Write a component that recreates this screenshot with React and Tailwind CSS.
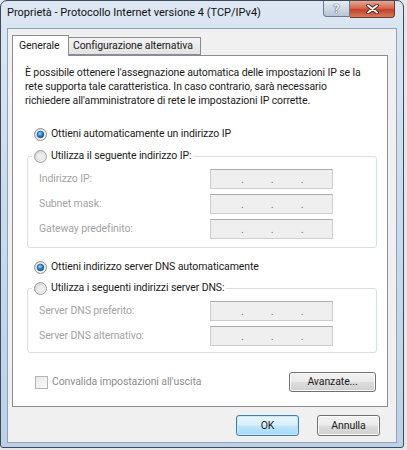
import { useId } from "react";

const RadioOn = () => {
  const id = useId().replace(/:/g, "");
  return (
    <svg width="13" height="13" viewBox="0 0 13 13" className="shrink-0">
      <defs>
        <linearGradient id={`rb${id}`} x1="0" y1="0" x2="1" y2="1">
          <stop offset="0" stopColor="#d4d4d4" />
          <stop offset="1" stopColor="#ffffff" />
        </linearGradient>
        <radialGradient id={`rd${id}`} cx="0.4" cy="0.35" r="0.75">
          <stop offset="0" stopColor="#a8dcff" />
          <stop offset="0.45" stopColor="#2f8ed8" />
          <stop offset="1" stopColor="#0b427c" />
        </radialGradient>
      </defs>
      <circle cx="6.5" cy="6.5" r="6" fill={`url(#rb${id})`} stroke="#8c8e90" />
      <circle cx="6.5" cy="6.5" r="3.3" fill={`url(#rd${id})`} stroke="#174c85" strokeWidth="0.7" />
    </svg>
  );
};

const RadioOff = () => {
  const id = useId().replace(/:/g, "");
  return (
    <svg width="13" height="13" viewBox="0 0 13 13" className="shrink-0">
      <defs>
        <linearGradient id={`ro${id}`} x1="0" y1="0" x2="1" y2="1">
          <stop offset="0" stopColor="#d2d2d2" />
          <stop offset="1" stopColor="#fbfbfb" />
        </linearGradient>
      </defs>
      <circle cx="6.5" cy="6.5" r="6" fill={`url(#ro${id})`} stroke="#9a9b9c" />
      <circle cx="6.5" cy="6.5" r="3.6" fill="#eeeeee" stroke="#dcdcdc" strokeWidth="0.6" />
    </svg>
  );
};

const IpBox = () => (
  <div className="flex h-[20px] w-[123px] items-center border border-[#cdcdcd] border-t-[#acacac] bg-[#efefef] text-[11px] leading-none text-[#707070]">
    <span className="ml-[30px]">.</span>
    <span className="ml-[27px]">.</span>
    <span className="ml-[27px]">.</span>
  </div>
);

const FieldRow = ({ label }) => (
  <div className="flex h-[20px] items-center">
    <span className="w-[182px] pl-[11px] text-[#a3a3a3]">{label}</span>
    <IpBox />
  </div>
);

const WinButton = ({ children, className = "" }) => (
  <button
    type="button"
    className={`flex items-center justify-center rounded-[3px] border border-[#707070] bg-[linear-gradient(#f2f2f2_0%,#ebebeb_48%,#dddddd_52%,#cfcfcf_100%)] text-[10.5px] tracking-[-0.1px] text-[#1b1b1b] shadow-[inset_0_0_0_1px_#fcfcfc] ${className}`}
  >
    {children}
  </button>
);

export default function App() {
  return (
    <div className="flex h-[450px] w-[407px] items-start overflow-hidden bg-[#e6e6e6] font-['Roboto',sans-serif] text-[10.5px] tracking-[-0.1px] text-[#1b1b1b]">
      <div className="flex h-[448px] w-[404px] flex-col rounded-t-[7px] rounded-b-[3px] border border-[#3e4a59] bg-[linear-gradient(#dde7f3_0%,#cbdcee_40%,#bcd1e8_100%)] px-[6px] pb-[4px]">
        <div className="flex h-[27px] items-start">
          <span className="flex-1 pt-[5px] text-[11px] leading-[14px] tracking-normal text-[#111]">
            Proprietà - Protocollo Internet versione 4 (TCP/IPv4)
          </span>
          <div className="mr-[2px] flex">
            <div className="flex h-[16px] w-[27px] items-center justify-center rounded-bl-[4px] border border-t-0 border-[#6b7a8d] bg-[linear-gradient(#e4ebf3_0%,#cfd9e5_50%,#b7c5d6_100%)] text-[12px] font-bold leading-none text-[#f4f6f9] [text-shadow:0_0_1px_#3c4856,0_0_1px_#3c4856]">
              ?
            </div>
            <div className="flex h-[17px] w-[45px] items-center justify-center rounded-br-[4px] border border-l-0 border-t-0 border-[#6e3b33] bg-[linear-gradient(#e9a795_0%,#d4674d_45%,#c2412a_55%,#d77a5a_100%)]">
              <svg width="13" height="10" viewBox="0 0 13 10">
                <path d="M2 1.5 L11 8.5 M11 1.5 L2 8.5" stroke="#4a1d16" strokeWidth="3.6" strokeLinecap="round" />
                <path d="M2 1.5 L11 8.5 M11 1.5 L2 8.5" stroke="#ffffff" strokeWidth="2" strokeLinecap="round" />
              </svg>
            </div>
          </div>
        </div>

        <div className="flex flex-1 flex-col border border-[#8fa2b8] bg-[#f0f0f0] pl-[4px] pr-[8px]">
          <div className="relative z-10 mt-[6px] -mb-px flex items-end">
            <div className="flex h-[21px] w-[57px] items-center whitespace-nowrap border border-b-0 border-[#898c95] bg-white pl-[6px] pb-[1px]">
              Generale
            </div>
            <div className="-ml-px mb-px flex h-[18px] w-[133px] items-center whitespace-nowrap border border-[#898c95] bg-[linear-gradient(#f3f3f3,#e3e3e3)] pl-[4px]">
              Configurazione alternativa
            </div>
          </div>

          <div className="flex h-[352px] flex-col border border-[#898c95] bg-white">
            <p className="ml-[12px] mt-[10px] leading-[14px]">
              <span className="block whitespace-nowrap">
                È possibile ottenere l'assegnazione automatica delle impostazioni IP se la
              </span>
              <span className="block whitespace-nowrap">
                rete supporta tale caratteristica. In caso contrario, sarà necessario
              </span>
              <span className="block whitespace-nowrap">
                richiedere all'amministratore di rete le impostazioni IP corrette.
              </span>
            </p>

            <div className="ml-[21px] mt-[18px] flex h-[16px] items-center gap-[4px]">
              <RadioOn />
              <span>Ottieni automaticamente un indirizzo IP</span>
            </div>

            <fieldset className="ml-[14px] mt-[6px] w-[350px] rounded-[3px] border border-[#d5dfe5] pb-[8px]">
              <legend className="ml-[4px] flex h-[16px] items-center gap-[4px] px-[2px]">
                <RadioOff />
                <span>Utilizza il seguente indirizzo IP:</span>
              </legend>
              <div className="mt-[5px] flex flex-col gap-[5px]">
                <FieldRow label="Indirizzo IP:" />
                <FieldRow label="Subnet mask:" />
                <FieldRow label="Gateway predefinito:" />
              </div>
            </fieldset>

            <div className="ml-[21px] mt-[11px] flex h-[16px] items-center gap-[4px]">
              <RadioOn />
              <span>Ottieni indirizzo server DNS automaticamente</span>
            </div>

            <fieldset className="ml-[14px] mt-[5px] w-[350px] rounded-[3px] border border-[#d5dfe5] pb-[6px]">
              <legend className="ml-[4px] flex h-[16px] items-center gap-[4px] px-[2px]">
                <RadioOff />
                <span>Utilizza i seguenti indirizzi server DNS:</span>
              </legend>
              <div className="mt-[5px] flex flex-col gap-[5px]">
                <FieldRow label="Server DNS preferito:" />
                <FieldRow label="Server DNS alternativo:" />
              </div>
            </fieldset>

            <div className="mt-[19px] flex h-[20px] items-center pl-[22px] pr-[11px]">
              <div className="h-[13px] w-[13px] border border-[#b4b4b4] bg-[linear-gradient(135deg,#e8e8e8,#fafafa)]" />
              <span className="ml-[4px] flex-1 text-[#8d8d8d]">Convalida impostazioni all'uscita</span>
              <WinButton className="h-[20px] w-[87px]">Avanzate...</WinButton>
            </div>
          </div>

          <div className="mt-[8px] flex justify-end gap-[18px] pr-[8px]">
            <button
              type="button"
              className="flex h-[21px] w-[63px] items-center justify-center rounded-[3px] border border-[#3c7fb1] bg-[linear-gradient(#eaf6fd_0%,#d9f0fc_48%,#bee6fd_52%,#a7d9f5_100%)] text-[10.5px] text-[#1b1b1b] shadow-[inset_0_0_0_1px_#c6e8f8]"
            >
              OK
            </button>
            <WinButton className="h-[21px] w-[63px]">Annulla</WinButton>
          </div>
        </div>
      </div>
    </div>
  );
}
